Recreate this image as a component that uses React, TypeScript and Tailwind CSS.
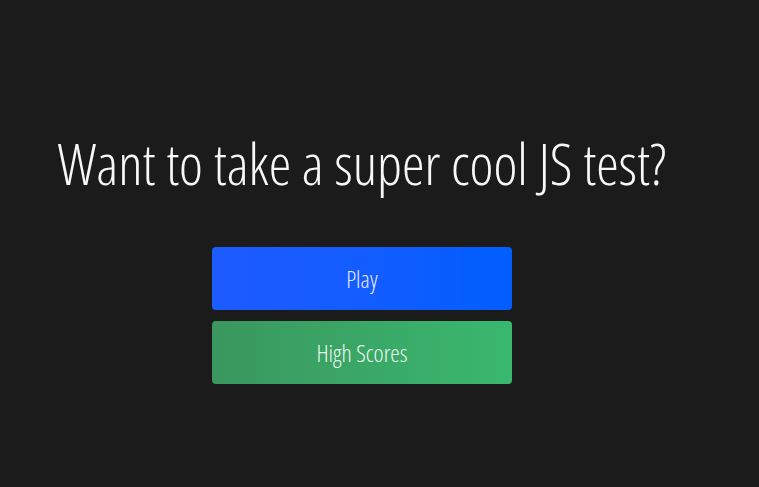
import React from 'react';

const App: React.FC = () => {
  return (
    <div className="min-h-[487px] w-full bg-[#1c1b1b] text-white font-['Open_Sans',sans-serif] font-stretch-[75%] font-light">
      <div className="w-[724px] flex flex-col items-center pt-[130px]">
        <h1 className="whitespace-nowrap text-[57px] leading-[66px] text-[#f7f7f7]">
          Want to take a super cool JS test?
        </h1>
        <div className="mt-[51px] flex flex-col gap-[11px] w-[300px]">
          <button className="h-[63px] rounded-[4px] bg-gradient-to-r from-[#1d5bff] to-[#005eff] text-[24px] text-[#e6e6ff]">
            Play
          </button>
          <button className="h-[63px] rounded-[4px] bg-gradient-to-r from-[#3a975e] to-[#39b86f] text-[24px] text-[#eef7f0]">
            High Scores
          </button>
        </div>
      </div>
    </div>
  );
};

export default App;
